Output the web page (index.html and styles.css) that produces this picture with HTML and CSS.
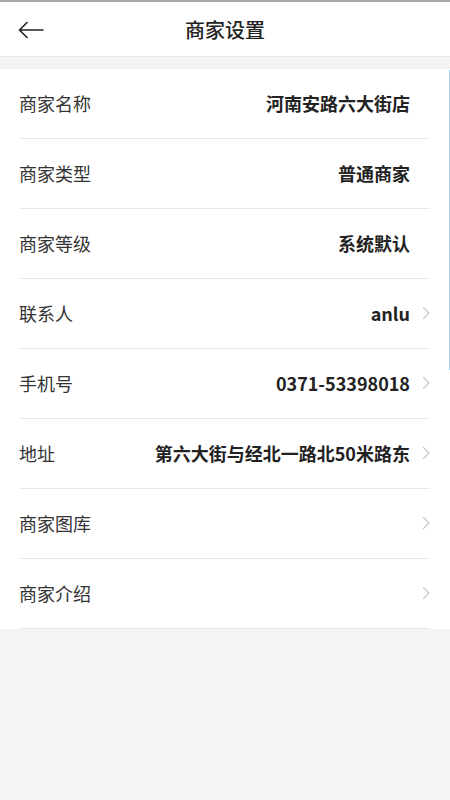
FILE: index.html
```html
<!DOCTYPE html>
<html lang="zh">
<head>
<meta charset="utf-8">
<link rel="stylesheet" href="styles.css">
</head>
<body>
<div class="page">
  <div class="topline"></div>
  <header class="header">
    <span class="back">
      <svg width="26" height="18" viewBox="0 0 26 18"><path d="M25 9H2M9 1.5L1.5 9L9 16.5" fill="none" stroke="#222" stroke-width="1.6" stroke-linecap="round" stroke-linejoin="round"/></svg>
    </span>
    <h1 class="title">商家设置</h1>
  </header>
  <div class="gap"></div>
  <ul class="list">
    <li class="row"><span class="label">商家名称</span><span class="value">河南安路六大街店</span><span class="chev"></span></li>
    <li class="row"><span class="label">商家类型</span><span class="value">普通商家</span><span class="chev"></span></li>
    <li class="row"><span class="label">商家等级</span><span class="value">系统默认</span><span class="chev"></span></li>
    <li class="row"><span class="label">联系人</span><span class="value">anlu</span><span class="chev"><svg width="8" height="14" viewBox="0 0 8 14"><path d="M1 1l6 6-6 6" fill="none" stroke="#c8c8c8" stroke-width="1.2"/></svg></span></li>
    <li class="row"><span class="label">手机号</span><span class="value">0371-53398018</span><span class="chev"><svg width="8" height="14" viewBox="0 0 8 14"><path d="M1 1l6 6-6 6" fill="none" stroke="#c8c8c8" stroke-width="1.2"/></svg></span></li>
    <li class="row"><span class="label">地址</span><span class="value">第六大街与经北一路北50米路东</span><span class="chev"><svg width="8" height="14" viewBox="0 0 8 14"><path d="M1 1l6 6-6 6" fill="none" stroke="#c8c8c8" stroke-width="1.2"/></svg></span></li>
    <li class="row"><span class="label">商家图库</span><span class="value"></span><span class="chev"><svg width="8" height="14" viewBox="0 0 8 14"><path d="M1 1l6 6-6 6" fill="none" stroke="#c8c8c8" stroke-width="1.2"/></svg></span></li>
    <li class="row"><span class="label">商家介绍</span><span class="value"></span><span class="chev"><svg width="8" height="14" viewBox="0 0 8 14"><path d="M1 1l6 6-6 6" fill="none" stroke="#c8c8c8" stroke-width="1.2"/></svg></span></li>
  </ul>
  <div class="scrollbar"></div>
</div>
</body>
</html>
```
FILE: styles.css
```css
* { box-sizing: border-box; }
html, body { margin: 0; padding: 0; }
body {
  background: #f4f4f4;
  font-family: "Noto Sans CJK SC", "Noto Sans", sans-serif;
  color: #222;
}
.page { position: relative; width: 450px; min-height: 800px; background: #f4f4f4; }
.topline { height: 2px; background: #a9a9a9; }
.header {
  position: relative;
  height: 55px;
  background: #fff;
  border-bottom: 1px solid #e6e6e6;
  display: flex;
  align-items: center;
  justify-content: center;
}
.back {
  position: absolute;
  left: 18px;
  top: 19px;
  display: flex;
}
.title {
  margin: 0;
  font-size: 20px;
  font-weight: 500;
  color: #222;
  line-height: 1;
  margin-top: 2px;
}
.gap { height: 12px; }
.list { list-style: none; margin: 0; padding: 0 20px 0 19px; background: #fff; }
.row {
  height: 70px;
  display: flex;
  align-items: center;
  border-bottom: 1px solid #e8e8e8;
  padding-bottom: 1px;
}
.label { font-size: 18px; color: #333; flex: none; }
.value {
  flex: 1;
  text-align: right;
  font-size: 18px;
  font-weight: 700;
  color: #222;
  white-space: nowrap;
}
.chev { width: 20px; flex: none; display: flex; justify-content: flex-end; }
.scrollbar {
  position: absolute;
  right: 0;
  top: 70px;
  width: 1px;
  height: 300px;
  background: #a9d3f2;
}
```
